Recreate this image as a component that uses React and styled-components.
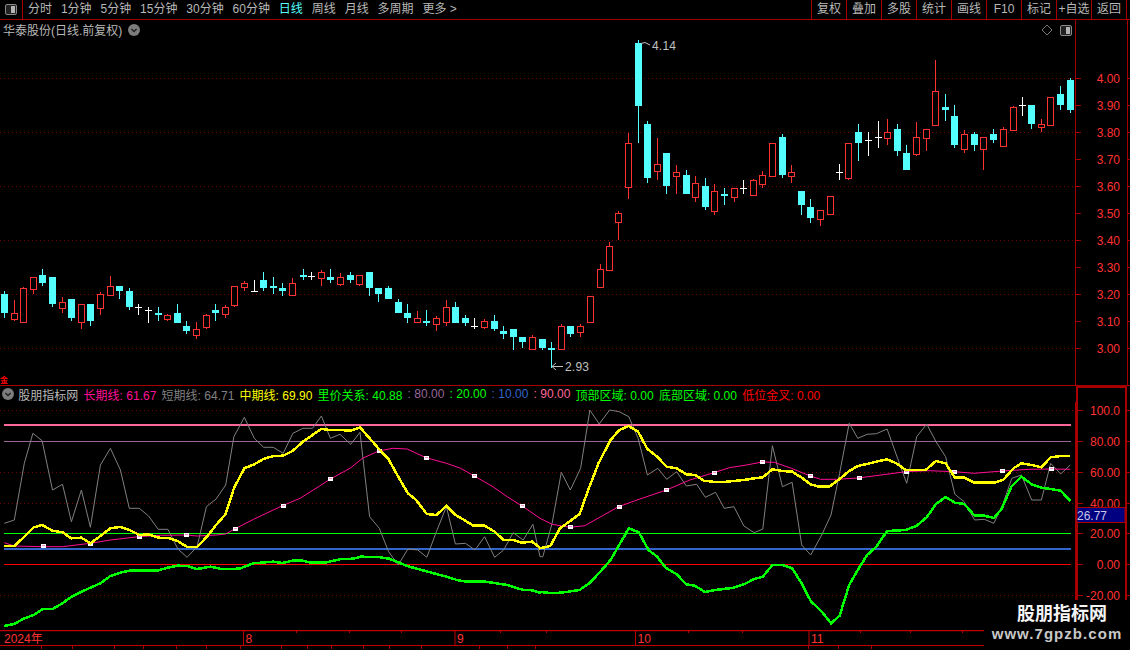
import React from "react";
import styled, { createGlobalStyle } from "styled-components";

const RED = "#ff3232";
const LINE = "#a80000";
const DOT = "#780000";
const CYAN = "#54ffff";
const FONT = `"Liberation Sans", "Noto Sans CJK SC", sans-serif`;

const GlobalStyle = createGlobalStyle`
  html, body { margin: 0; padding: 0; background: #000; }
  body { font-family: ${FONT}; overflow: hidden; }
`;

// [x, high, bodyTop, bodyBottom, low, kind] in page pixels; r = red hollow, c = cyan, w = white doji
const candles = [
  [4, 291, 294, 313, 318, "c"], [14, 300, 313, 319, 321, "r"], [23, 287, 288, 322, 322, "r"], [33, 277, 277, 289, 294, "r"],
  [42, 269, 275, 283, 286, "c"], [52, 277, 277, 304, 307, "c"], [62, 297, 302, 308, 313, "r"], [71, 299, 299, 318, 321, "c"],
  [81, 304, 304, 322, 329, "r"], [90, 304, 304, 321, 326, "c"], [100, 292, 294, 308, 315, "r"], [110, 276, 286, 295, 296, "r"],
  [119, 286, 286, 291, 299, "c"], [129, 288, 291, 307, 310, "c"], [138, 304, 307, 308, 315, "w"], [148, 307, 310, 311, 323, "w"],
  [158, 307, 313, 315, 321, "c"], [167, 314, 315, 319, 321, "r"], [177, 304, 313, 323, 323, "c"], [186, 321, 326, 331, 334, "c"],
  [196, 322, 329, 335, 339, "r"], [206, 314, 315, 327, 329, "r"], [215, 304, 310, 313, 321, "c"], [225, 305, 307, 314, 318, "r"],
  [234, 286, 286, 305, 307, "r"], [244, 281, 283, 287, 291, "r"], [254, 280, 291, 292, 292, "w"], [263, 272, 280, 288, 291, "c"],
  [273, 277, 286, 288, 294, "c"], [282, 283, 288, 291, 296, "c"], [292, 278, 283, 295, 296, "r"], [303, 269, 275, 277, 280, "c"],
  [311, 272, 276, 277, 280, "w"], [321, 270, 272, 278, 286, "r"], [330, 269, 277, 280, 283, "c"], [340, 273, 277, 284, 286, "r"],
  [350, 272, 275, 280, 283, "c"], [359, 275, 275, 284, 286, "r"], [369, 272, 272, 288, 296, "c"], [378, 288, 288, 294, 302, "c"],
  [388, 286, 288, 299, 299, "c"], [398, 299, 302, 313, 313, "c"], [407, 304, 313, 318, 323, "c"], [417, 311, 318, 322, 323, "r"],
  [426, 310, 321, 323, 326, "c"], [436, 316, 318, 324, 331, "r"], [446, 300, 307, 322, 326, "r"], [455, 302, 307, 323, 323, "c"],
  [465, 315, 318, 323, 326, "c"], [474, 318, 326, 327, 329, "w"], [484, 319, 321, 327, 329, "r"], [494, 315, 321, 329, 331, "c"],
  [503, 326, 331, 334, 339, "c"], [513, 329, 329, 337, 350, "c"], [522, 337, 337, 342, 348, "c"], [532, 335, 337, 349, 349, "r"],
  [542, 339, 339, 348, 350, "c"], [551, 342, 348, 350, 368, "c"], [561, 324, 326, 349, 350, "r"], [570, 326, 326, 334, 337, "c"],
  [580, 324, 326, 332, 337, "r"], [590, 296, 296, 322, 323, "r"], [600, 264, 269, 287, 288, "r"], [609, 242, 246, 270, 271, "r"],
  [618, 211, 213, 222, 240, "r"], [628, 133, 143, 187, 199, "r"], [638, 40, 43, 106, 143, "c"], [647, 121, 124, 178, 183, "c"],
  [657, 138, 164, 171, 180, "r"], [666, 153, 153, 186, 194, "c"], [676, 165, 172, 176, 194, "r"], [686, 170, 175, 194, 194, "c"],
  [695, 176, 183, 197, 202, "r"], [705, 178, 186, 207, 210, "c"], [714, 184, 191, 211, 215, "r"], [724, 188, 194, 196, 205, "c"],
  [734, 188, 188, 197, 202, "r"], [743, 180, 188, 189, 194, "w"], [753, 179, 180, 195, 196, "r"], [762, 171, 175, 184, 188, "r"],
  [772, 143, 143, 176, 176, "r"], [782, 134, 137, 175, 178, "c"], [791, 165, 172, 176, 183, "r"], [801, 191, 191, 205, 215, "c"],
  [810, 199, 207, 218, 223, "c"], [820, 210, 210, 219, 226, "r"], [830, 196, 196, 214, 214, "r"], [839, 164, 172, 173, 180, "w"],
  [848, 143, 143, 178, 180, "r"], [858, 124, 132, 143, 161, "c"], [868, 132, 140, 141, 156, "w"], [878, 121, 137, 138, 148, "w"],
  [887, 119, 132, 138, 145, "r"], [897, 124, 129, 151, 156, "c"], [906, 145, 153, 170, 170, "c"], [916, 122, 137, 154, 156, "r"],
  [926, 129, 129, 138, 151, "r"], [935, 60, 91, 125, 126, "r"], [945, 94, 107, 110, 121, "c"], [954, 105, 116, 145, 148, "c"],
  [964, 130, 134, 149, 153, "r"], [974, 132, 134, 145, 151, "c"], [983, 137, 137, 149, 170, "r"], [993, 129, 134, 140, 143, "c"],
  [1003, 127, 129, 146, 146, "r"], [1013, 106, 107, 130, 130, "r"], [1022, 97, 105, 106, 116, "w"], [1031, 105, 105, 124, 129, "c"],
  [1041, 119, 124, 127, 132, "r"], [1050, 97, 97, 125, 126, "r"], [1060, 86, 94, 105, 110, "c"], [1070, 78, 80, 110, 113, "c"],
];

// line points were read off two crops of the chart, so they go through these helpers
const left = (pts) => pts.map(([x, y]) => [x / 2.8, 400 + y / 3]);
const right = (pts) => pts.map(([x, y]) => [540 + x / 2.904, 400 + y / 3]);
const toPath = (pts) => pts.map(([x, y]) => `${x.toFixed(1)},${y.toFixed(1)}`).join(" ");

const grayLine = [
  ...left([[12,370],[40,360],[68,190],[92,100],[118,122],[147,270],[175,253],[200,365],[228,270],[253,382],[281,195],[309,145],[337,210],[362,325],[390,325],[416,348],[443,388],[470,388],[498,447],[524,472],[552,440],[578,320],[605,297],[632,255],[655,110],[684,52],[712,115],[738,142],[765,142],[793,160],[820,100],[848,85],[875,85],[900,48],[925,115],[952,103],[982,133],[1008,97],[1035,350],[1062,385],[1088,455],[1115,495],[1142,447],[1170,450],[1195,472],[1222,395],[1250,320],[1275,432],[1303,430],[1330,450],[1357,410],[1385,472],[1410,450],[1437,398],[1465,420],[1492,373],[1512,470]]),
  ...right([[8,470],[35,370],[62,217],[88,270],[118,205],[145,30],[172,72],[202,30],[230,35],[258,50],[285,115],[312,225],[342,205],[368,238],[397,215],[425,258],[455,253],[480,292],[510,277],[535,325],[563,320],[592,378],[622,398],[647,387],[675,137],[704,260],[732,247],[760,435],[786,465],[818,405],[845,345],[870,220],[898,70],[923,115],[950,103],[977,101],[1008,87],[1035,165],[1065,250],[1094,110],[1123,72],[1150,125],[1178,170],[1205,283],[1232,305],[1262,360],[1290,358],[1318,370],[1345,310],[1370,235],[1398,225],[1428,300],[1456,300],[1483,190],[1512,222],[1540,195]]),
];

const yellowLine = [
  ...left([[12,438],[40,438],[68,410],[95,382],[118,375],[147,392],[175,397],[200,415],[228,413],[253,430],[281,408],[309,385],[337,381],[362,390],[390,405],[416,403],[443,413],[470,414],[498,423],[524,441],[552,441],[578,412],[605,375],[632,342],[655,265],[684,205],[712,193],[738,177],[765,168],[793,167],[820,152],[848,125],[875,105],[900,87],[925,90],[952,90],[982,92],[1008,82],[1035,115],[1062,148],[1088,178],[1115,230],[1142,280],[1165,300],[1195,342],[1222,345],[1250,318],[1275,345],[1303,362],[1325,377],[1357,377],[1385,395],[1410,420],[1437,420],[1460,428],[1490,425],[1512,443]]),
  ...right([[0,445],[30,438],[58,385],[85,365],[115,342],[140,270],[170,190],[205,120],[230,90],[258,78],[285,95],[312,147],[340,170],[368,200],[397,205],[425,223],[450,225],[475,242],[510,246],[535,246],[563,243],[592,240],[622,235],[647,232],[675,208],[704,213],[732,215],[760,233],[786,253],[810,260],[840,260],[870,237],[898,213],[923,198],[950,192],[977,185],[1008,178],[1035,190],[1062,210],[1094,210],[1120,210],[1150,183],[1178,190],[1205,233],[1232,233],[1262,248],[1290,248],[1318,248],[1345,240],[1375,205],[1398,190],[1428,195],[1456,202],[1483,172],[1512,168],[1540,168]]),
];

const magentaLine = [
  ...left([[12,428],[40,438],[118,440],[175,440],[253,430],[309,420],[388,410],[450,406],[522,405],[552,408],[605,405],[632,402],[657,387],[710,358],[765,330],[791,317],[840,295],[895,258],[925,237],[980,205],[1015,175],[1060,153],[1100,145],[1140,147],[1193,173],[1250,190],[1290,205],[1328,228],[1380,260],[1420,290],[1462,318],[1512,355]]),
  ...right([[0,355],[35,373],[88,382],[130,377],[180,348],[228,320],[290,297],[367,270],[435,240],[505,218],[550,203],[600,195],[645,186],[680,187],[730,205],[785,228],[815,238],[860,238],[925,234],[990,225],[1063,215],[1130,212],[1203,215],[1260,220],[1343,213],[1420,208],[1483,207],[1540,208]]),
];

const greenLine = [
  ...left([[12,678],[40,672],[68,655],[95,645],[120,627],[147,627],[175,610],[200,590],[228,575],[281,550],[309,528],[337,518],[362,512],[440,512],[470,503],[498,497],[524,498],[552,507],[590,500],[620,507],[670,506],[710,490],[765,485],[790,489],[820,482],[848,482],[870,488],[910,488],[955,477],[990,476],[1010,470],[1060,471],[1090,476],[1115,487],[1140,498],[1170,507],[1222,522],[1250,530],[1280,540],[1305,545],[1360,545],[1420,555],[1465,570],[1490,571],[1512,578]]),
  ...right([[0,576],[30,579],[62,578],[115,570],[145,548],[175,515],[205,480],[230,435],[258,385],[287,397],[315,450],[340,470],[365,503],[397,523],[425,553],[450,557],[478,576],[510,570],[563,563],[592,553],[622,537],[647,530],[675,495],[704,495],[732,505],[760,550],[786,603],[818,635],[845,670],[870,647],[898,555],[923,510],[950,465],[977,440],[1008,393],[1062,390],[1094,377],[1123,352],[1150,312],[1178,291],[1205,308],[1232,312],[1262,347],[1290,347],[1318,354],[1340,328],[1370,258],[1398,230],[1428,253],[1456,263],[1483,267],[1512,272],[1540,303]]),
];

const markers = [
  ...left([[119,438],[253,433],[388,411],[522,406],[657,387],[791,317],[925,237],[1060,153],[1193,173],[1328,228],[1462,318]]),
  ...right([[88,380],[228,320],[367,270],[505,218],[645,186],[785,228],[925,234],[1063,215],[1203,215],[1343,213],[1483,207]]),
];

const priceTicks = [
  ["4.00", 78.5], ["3.90", 105.5], ["3.80", 132.5], ["3.70", 159.5], ["3.60", 186.5], ["3.50", 213.5],
  ["3.40", 240.5], ["3.30", 267.5], ["3.20", 294.5], ["3.10", 321.5], ["3.00", 348.5],
];
const priceDots = [78.5, 132.5, 186.5, 240.5, 294.5, 348.5];

const indicatorTicks = [
  ["100.0", 410.5], ["80.00", 441.5], ["60.00", 472.5], ["40.00", 503.5], ["20.00", 533.5], ["0.00", 564.5], ["-20.00", 595.5],
];
const indicatorDots = [410.5, 472.5, 503.5, 595.5];

const levels = [
  { y: 425, color: "#ff6699", w: 2 },
  { y: 441.5, color: "#996699", w: 1 },
  { y: 533.5, color: "#00ff00", w: 1 },
  { y: 549, color: "#3366cc", w: 2 },
  { y: 564.5, color: "#ff0000", w: 1 },
];

const periods = ["分时", "1分钟", "5分钟", "15分钟", "30分钟", "60分钟", "日线", "周线", "月线", "多周期", "更多 >"];
const actions = ["复权", "叠加", "多股", "统计", "画线", "F10", "标记", "+自选", "返回"];

const legend = [
  { label: "长期线", value: "61.67", color: "#ff0f96" },
  { label: "短期线", value: "64.71", color: "#808080" },
  { label: "中期线", value: "69.90", color: "#ffff00" },
  { label: "里价关系", value: "40.88", color: "#00ff00" },
  { value: "80.00", color: "#996699" },
  { value: "20.00", color: "#00ff00" },
  { value: "10.00", color: "#3366cc" },
  { value: "90.00", color: "#ff6699" },
  { label: "顶部区域", value: "0.00", color: "#00ff00" },
  { label: "底部区域", value: "0.00", color: "#00ff00" },
  { label: "低位金叉", value: "0.00", color: "#ff0000" },
];

const months = [
  { x: 243.5, text: "8" },
  { x: 455, text: "9" },
  { x: 635.5, text: "10" },
  { x: 809, text: "11" },
];
const smallTicks = [296, 349, 401, 500, 546, 688, 742, 860, 910, 962];
const statusEdges = [42, 73, 115, 144, 177, 207, 241, 282, 308, 332, 364, 390, 422, 480, 508, 536, 809, 839, 872];

const Page = styled.div`
  position: relative;
  width: 1130px;
  height: 650px;
  overflow: hidden;
  background: #000;
  display: flex;
  flex-direction: column;
`;

const Toolbar = styled.div`
  display: flex;
  height: 19px;
  flex: none;
  border-bottom: 1px solid ${LINE};
  font-size: 12px;
  line-height: 19px;
  color: #b8b8b8;
`;

const PanelToggle = styled.div`
  width: 22px;
  flex: none;
  display: flex;
  align-items: center;
  justify-content: center;
  border-right: 1px solid ${LINE};
`;

const Periods = styled.div`
  display: flex;
  gap: 8.9px;
  padding-left: 5px;
`;

const Period = styled.span`
  color: ${(p) => (p.$active ? CYAN : "#b8b8b8")};
  white-space: nowrap;
`;

const Actions = styled.div`
  display: flex;
  margin-left: auto;
  margin-right: 3px;
  border-right: 1px solid ${LINE};
`;

const Action = styled.span`
  width: 34px;
  text-align: center;
  border-left: 1px solid ${LINE};
  white-space: nowrap;
`;

const Pane = styled.div`
  display: flex;
  flex: none;
  position: relative;
  height: ${(p) => p.$h}px;
  border-bottom: ${(p) => (p.$line ? `1px solid ${LINE}` : "none")};
`;

const PlotColumn = styled.div`
  width: 1076px;
  flex: none;
  display: flex;
  flex-direction: column;
`;

const Drawing = styled.svg`
  display: block;
  flex: none;
  text {
    font-family: ${FONT};
    font-size: 12px;
  }
`;

const PaneTitle = styled.div`
  position: absolute;
  left: 3px;
  top: 0;
  height: 19px;
  display: flex;
  align-items: center;
  gap: 6px;
  font-size: 12px;
  color: #b8b8b8;
`;

const PaneTools = styled.div`
  position: absolute;
  right: 58px;
  top: 4px;
  display: flex;
  align-items: center;
  gap: 7px;
`;

const Legend = styled.div`
  height: 16px;
  flex: none;
  display: flex;
  align-items: center;
  gap: 5.3px;
  padding-left: 2px;
  font-size: 12px;
  white-space: nowrap;
`;

const LegendName = styled.span`
  color: #b8b8b8;
  margin-left: -1px;
`;

const LegendItem = styled.span`
  color: ${(p) => p.$color};
`;

const DateAxis = styled.div`
  flex: none;
  height: 16px;
`;

const StatusRow = styled.div`
  flex: none;
  height: 3px;
  display: flex;
`;

const StatusCell = styled.span`
  flex: none;
  width: ${(p) => p.$w}px;
  border-right: 1px solid ${LINE};
  box-sizing: border-box;
`;

const Watermark = styled.div`
  position: absolute;
  right: 0;
  bottom: 0;
  width: 146px;
  height: 50px;
  background: #000;
  display: flex;
  flex-direction: column;
  align-items: center;
  color: #f4f4f4;
`;

const WatermarkTitle = styled.div`
  font-size: 18px;
  font-weight: 700;
  line-height: 24px;
  margin: 2px 0 0 10px;
`;

const WatermarkUrl = styled.div`
  font-size: 15px;
  line-height: 16px;
  font-weight: 700;
  color: #c8c8c8;
  letter-spacing: 1.05px;
  white-space: nowrap;
`;

const SplitIcon = () => (
  <svg width="12" height="11" viewBox="0 0 12 11">
    <rect x="0.5" y="0.5" width="11" height="10" rx="1.5" fill="#222" stroke="#8a8a8a" />
    <rect x="6" y="2" width="4" height="7" fill="#b4b4b4" />
  </svg>
);

const Chevron = () => (
  <svg width="12" height="12" viewBox="0 0 12 12">
    <circle cx="6" cy="6" r="6" fill="#7c7c7c" />
    <path d="M3.4 5 6 7.6 8.6 5" fill="none" stroke="#222" strokeWidth="1.4" />
  </svg>
);

const Diamond = () => (
  <svg width="12" height="12" viewBox="0 0 12 12">
    <path d="M6 1 11 6 6 11 1 6Z" fill="none" stroke="#777" />
  </svg>
);

const Candle = ({ c }) => {
  const [x, high, top, bottom, low, kind] = c;
  if (kind === "w") {
    return (
      <g stroke="#fff">
        <line x1={x + 0.5} x2={x + 0.5} y1={high} y2={low} />
        <line x1={x - 3} x2={x + 4} y1={top + 0.5} y2={top + 0.5} />
      </g>
    );
  }
  if (kind === "c") {
    return (
      <g>
        <line x1={x + 0.5} x2={x + 0.5} y1={high} y2={low} stroke={CYAN} />
        <rect x={x - 3} y={top} width="7" height={bottom - top} fill={CYAN} />
      </g>
    );
  }
  return (
    <g stroke={RED}>
      <line x1={x + 0.5} x2={x + 0.5} y1={high} y2={top} />
      <line x1={x + 0.5} x2={x + 0.5} y1={bottom} y2={low} />
      <rect x={x - 2.5} y={top + 0.5} width="6" height={bottom - top} fill="#000" />
    </g>
  );
};

const PricePlot = () => (
  <Drawing width="1076" height="365" viewBox="0 20 1076 365">
    {priceDots.map((y) => (
      <line key={y} x1="0" x2="1076" y1={y} y2={y} stroke={DOT} strokeDasharray="1 3" shapeRendering="crispEdges" />
    ))}
    <g shapeRendering="crispEdges">
      {candles.map((c) => (
        <Candle key={c[0]} c={c} />
      ))}
    </g>
    <line x1="1075.5" x2="1075.5" y1="20" y2="385" stroke={LINE} />
    <path d="M641 43.5 L645 42.5 L650 45" fill="none" stroke="#c0c0c0" />
    <text x="652" y="50" fill="#c0c0c0" letterSpacing="0.2">4.14</text>
    <path d="M563 366.5 H552 M556 363 L552 366.5 L556 370" fill="none" stroke="#c0c0c0" />
    <text x="565" y="371" fill="#c0c0c0" letterSpacing="0.2">2.93</text>
    <text x="0" y="383" fill="#ff0000" style={{ fontSize: 8, fontWeight: 700 }}>金</text>
  </Drawing>
);

const PriceAxis = () => (
  <Drawing width="54" height="365" viewBox="1076 20 54 365">
    {priceTicks.map(([label, y]) => (
      <g key={label}>
        <line x1="1076" x2="1081" y1={y} y2={y} stroke={LINE} />
        <line x1="1127" x2="1130" y1={y} y2={y} stroke={LINE} />
        <text x="1120" y={y + 4.5} textAnchor="end" fill={RED}>{label}</text>
      </g>
    ))}
    <line x1="1127.5" x2="1127.5" y1="20" y2="385" stroke={LINE} />
  </Drawing>
);

const IndicatorPlot = () => (
  <Drawing width="1076" height="228" viewBox="0 402 1076 228">
    {indicatorDots.map((y) => (
      <line key={y} x1="0" x2="1076" y1={y} y2={y} stroke={DOT} strokeDasharray="1 3" shapeRendering="crispEdges" />
    ))}
    {levels.map((l) => (
      <line key={l.y} x1="4" x2="1071" y1={l.y} y2={l.y} stroke={l.color} strokeWidth={l.w} shapeRendering="crispEdges" />
    ))}
    <polyline points={toPath(grayLine)} fill="none" stroke="#808080" />
    <polyline points={toPath(magentaLine)} fill="none" stroke="#ff0f96" />
    {markers.map(([x, y]) => (
      <g key={x} shapeRendering="crispEdges">
        <rect x={Math.round(x) - 2} y={Math.round(y) - 2} width="5" height="4" fill="#fff" />
        <rect x={Math.round(x) - 1} y={Math.round(y) - 1} width="3" height="1" fill="#ff8acb" />
      </g>
    ))}
    <polyline points={toPath(yellowLine)} fill="none" stroke="#ffff00" strokeWidth="2.5" shapeRendering="crispEdges" />
    <polyline points={toPath(greenLine)} fill="none" stroke="#00ff00" strokeWidth="2.5" shapeRendering="crispEdges" />
    <line x1="1075.5" x2="1075.5" y1="402" y2="630" stroke={LINE} />
  </Drawing>
);

const IndicatorAxis = () => (
  <Drawing width="54" height="244" viewBox="1076 386 54 244">
    <path d="M1077 630 V387 H1126 V630" fill="none" stroke={LINE} strokeWidth="2" />
    {indicatorTicks.map(([label, y]) => (
      <g key={label}>
        <line x1="1078" x2="1083" y1={y} y2={y} stroke={LINE} />
        <line x1="1127" x2="1130" y1={y} y2={y} stroke={LINE} />
        <text x="1120" y={y + 4.5} textAnchor="end" fill={RED}>{label}</text>
      </g>
    ))}
    <rect x="1077" y="507.5" width="48" height="15" fill="#000080" stroke={LINE} />
    <text x="1077" y="519.5" fill="#c8c8e8">26.77</text>
  </Drawing>
);

const DateTicks = () => (
  <Drawing width="1130" height="16" viewBox="0 630 1130 16">
    <line x1="0" x2="1130" y1="630.5" y2="630.5" stroke="#c00000" strokeWidth="1.4" />
    <line x1="0" x2="1130" y1="645.5" y2="645.5" stroke="#c00000" />
    <text x="4" y="643" fill={RED}>2024年</text>
    {months.map((m) => (
      <g key={m.text}>
        <line x1={m.x} x2={m.x} y1="630" y2="646" stroke="#c00000" />
        <text x={m.x + 2} y="643" fill={RED}>{m.text}</text>
      </g>
    ))}
    {smallTicks.map((x) => (
      <line key={x} x1={x + 0.5} x2={x + 0.5} y1="630" y2="633" stroke="#c00000" />
    ))}
  </Drawing>
);

export default function App() {
  return (
    <Page>
      <GlobalStyle />
      <Toolbar>
        <PanelToggle>
          <SplitIcon />
        </PanelToggle>
        <Periods>
          {periods.map((p) => (
            <Period key={p} $active={p === "日线"}>{p}</Period>
          ))}
        </Periods>
        <Actions>
          {actions.map((a) => (
            <Action key={a}>{a}</Action>
          ))}
        </Actions>
      </Toolbar>

      <Pane $h={365} $line>
        <PlotColumn>
          <PricePlot />
        </PlotColumn>
        <PriceAxis />
        <PaneTitle>
          华泰股份(日线.前复权)
          <Chevron />
        </PaneTitle>
        <PaneTools>
          <Diamond />
          <SplitIcon />
        </PaneTools>
      </Pane>

      <Pane $h={244}>
        <PlotColumn>
          <Legend>
            <Chevron />
            <LegendName>股朋指标网</LegendName>
            {legend.map((l, i) => (
              <LegendItem key={i} $color={l.color}>
                {l.label ? `${l.label}: ${l.value}` : `: ${l.value}`}
              </LegendItem>
            ))}
          </Legend>
          <IndicatorPlot />
        </PlotColumn>
        <IndicatorAxis />
      </Pane>

      <DateAxis>
        <DateTicks />
      </DateAxis>
      <StatusRow>
        {statusEdges.map((edge, i) => (
          <StatusCell key={edge} $w={edge - (i ? statusEdges[i - 1] : 0)} />
        ))}
      </StatusRow>

      <Watermark>
        <WatermarkTitle>股朋指标网</WatermarkTitle>
        <WatermarkUrl>www.7gpzb.com</WatermarkUrl>
      </Watermark>
    </Page>
  );
}
